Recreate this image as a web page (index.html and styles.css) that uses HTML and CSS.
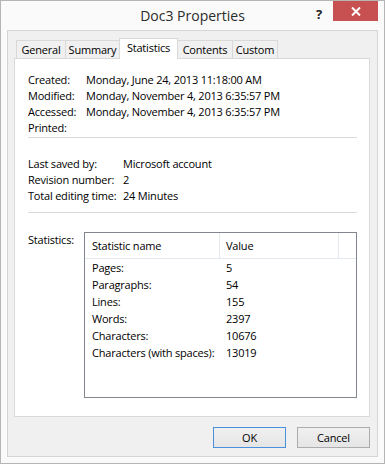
FILE: index.html
```html
<!DOCTYPE html>
<html lang="en">
<head>
    <meta charset="UTF-8">
    <meta name="viewport" content="width=device-width, initial-scale=1.0">
    <title>Doc3 Properties</title>
    <link rel="stylesheet" href="styles.css">
</head>
<body>

    <div class="window">
        <div class="titlebar">
            <div class="spacer"></div>
            <div class="title">Doc3 Properties</div>
            <div class="caption-buttons">
                <div class="help">?</div>
                <div class="close">
                    <svg width="10" height="9" viewBox="0 0 10 9">
                        <path d="M1 0.5 L9 8.5 M9 0.5 L1 8.5" stroke="#fff" stroke-width="2" fill="none"/>
                    </svg>
                </div>
            </div>
        </div>

        <div class="client">
            <div class="tabs">
                <div class="tab tab-general">General</div>
                <div class="tab tab-summary">Summary</div>
                <div class="tab tab-statistics selected">Statistics</div>
                <div class="tab tab-contents">Contents</div>
                <div class="tab tab-custom">Custom</div>
            </div>

            <div class="panel">
                <div class="info dates">
                    <div class="info-row"><span class="label">Created:</span><span>Monday, June 24, 2013 11:18:00 AM</span></div>
                    <div class="info-row"><span class="label">Modified:</span><span>Monday, November 4, 2013 6:35:57 PM</span></div>
                    <div class="info-row"><span class="label">Accessed:</span><span>Monday, November 4, 2013 6:35:57 PM</span></div>
                    <div class="info-row"><span class="label">Printed:</span><span></span></div>
                </div>

                <div class="separator sep-first"></div>

                <div class="info saved">
                    <div class="info-row"><span class="label">Last saved by:</span><span>Microsoft account</span></div>
                    <div class="info-row"><span class="label">Revision number:</span><span>2</span></div>
                    <div class="info-row"><span class="label">Total editing time:</span><span>24 Minutes</span></div>
                </div>

                <div class="separator sep-second"></div>

                <div class="stats">
                    <div class="stats-label">Statistics:</div>
                    <div class="listbox">
                        <div class="lv-head">
                            <div class="col-name">Statistic name</div>
                            <div class="col-value">Value</div>
                            <div class="col-rest"></div>
                        </div>
                        <div class="lv-row"><div class="col-name">Pages:</div><div class="col-value">5</div></div>
                        <div class="lv-row"><div class="col-name">Paragraphs:</div><div class="col-value">54</div></div>
                        <div class="lv-row"><div class="col-name">Lines:</div><div class="col-value">155</div></div>
                        <div class="lv-row"><div class="col-name">Words:</div><div class="col-value">2397</div></div>
                        <div class="lv-row"><div class="col-name">Characters:</div><div class="col-value">10676</div></div>
                        <div class="lv-row"><div class="col-name">Characters (with spaces):</div><div class="col-value">13019</div></div>
                    </div>
                </div>
            </div>

            <div class="buttons">
                <button class="btn default">OK</button>
                <button class="btn">Cancel</button>
            </div>
        </div>
    </div>

</body>
</html>
```

FILE: styles.css
```css
body {
    margin: 0;
    padding: 0;
    font-family: "Open Sans", Arial, sans-serif;
    font-size: 11px;
    letter-spacing: -0.2px;
    color: #000;
    background-color: #fafafa;
}
.window {
    width: 385px;
    height: 464px;
    box-sizing: border-box;
    border: 1px solid #b5b5b5;
    background-color: #fafafa;
    display: flex;
    flex-direction: column;
}
.titlebar {
    height: 29px;
    display: grid;
    grid-template-columns: 73px 1fr 73px;
}
.title {
    text-align: center;
    font-size: 14px;
    letter-spacing: 0;
    line-height: 29px;
    color: #2b2b2b;
}
.caption-buttons {
    display: flex;
    align-items: flex-start;
}
.help {
    width: 16px;
    margin-right: 6px;
    text-align: center;
    font-weight: bold;
    font-size: 13px;
    line-height: 26px;
    color: #222;
}
.close {
    width: 45px;
    height: 20px;
    background-color: #c75050;
    display: flex;
    justify-content: center;
    align-items: center;
}
.client {
    flex: 1;
    margin: 0 6px 6px 6px;
    border: 1px solid #d5d5d5;
    background-color: #f0f0f0;
    padding-top: 7px;
    display: flex;
    flex-direction: column;
}
.tabs {
    height: 20px;
    display: flex;
    align-items: flex-end;
    padding-left: 8px;
}
.tab {
    box-sizing: border-box;
    height: 18px;
    border: 1px solid #d9d9d9;
    border-bottom: none;
    margin-right: -1px;
    background-color: #f0f0f0;
    text-align: center;
    line-height: 17px;
}
.tab-general { width: 50px; }
.tab-summary { width: 55px; }
.tab-statistics { width: 59px; }
.tab-contents { width: 56px; }
.tab-custom { width: 46px; }
.tab.selected {
    height: 21px;
    margin-bottom: -1px;
    background-color: #fff;
    line-height: 18px;
    position: relative;
    z-index: 1;
}
.panel {
    height: 359px;
    box-sizing: border-box;
    margin: 0 7px 0 6px;
    border: 1px solid #d9d9d9;
    background-color: #fff;
    padding: 13px 12px 0 13px;
}
.info-row {
    height: 16px;
    line-height: 16px;
    display: flex;
    white-space: nowrap;
}
.dates .label { width: 58px; }
.saved .label { width: 95px; }
.separator {
    height: 1px;
    background-color: #dadada;
}
.sep-first { margin: 1px 0 18px 0; }
.sep-second { margin: 8px 0 19px 0; }
.stats {
    display: flex;
}
.stats-label {
    width: 56px;
    line-height: 16px;
}
.listbox {
    width: 273px;
    height: 166px;
    box-sizing: border-box;
    border: 1px solid #82878f;
}
.lv-head {
    height: 26px;
    box-sizing: border-box;
    border-bottom: 1px solid #e3e8ef;
    display: flex;
    line-height: 25px;
}
.lv-head .col-name,
.lv-head .col-value {
    border-right: 1px solid #e3e8ef;
}
.lv-row {
    height: 17px;
    line-height: 17px;
    display: flex;
    white-space: nowrap;
}
.col-name {
    width: 135px;
    box-sizing: border-box;
    padding-left: 7px;
}
.col-value {
    width: 119px;
    box-sizing: border-box;
    padding-left: 6px;
}
.col-rest {
    flex: 1;
}
.buttons {
    display: flex;
    justify-content: flex-end;
    gap: 11px;
    margin-top: 10px;
    padding-right: 7px;
}
.btn {
    width: 73px;
    height: 21px;
    box-sizing: border-box;
    border: 1px solid #acacac;
    background: linear-gradient(#f0f0f0, #e5e5e5);
    font-family: "Open Sans", Arial, sans-serif;
    font-size: 11px;
    letter-spacing: -0.2px;
    color: #000;
    padding: 0;
    margin: 0;
}
.btn.default {
    border-color: #4a90dc;
}
```
